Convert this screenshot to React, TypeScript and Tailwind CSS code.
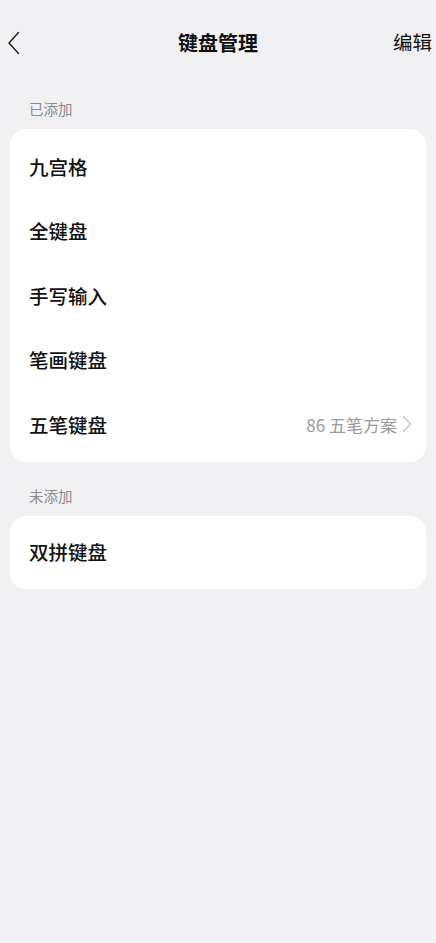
import React from 'react';

const added = ['九宫格', '全键盘', '手写输入', '笔画键盘'];

function Row({ title, extra }: { title: string; extra?: string }) {
  return (
    <div className="h-[64.5px] flex items-center justify-between pl-[19px] pr-[14px]">
      <span className="text-[19.5px] font-medium text-[#111] leading-none">{title}</span>
      {extra && (
        <div className="flex items-center gap-[5px]">
          <span className="text-[17px] text-[#9a9a9c] leading-none">{extra}</span>
          <svg width="10" height="18" viewBox="0 0 10 18" fill="none">
            <path d="M1.5 1.5 L8.5 9 L1.5 16.5" stroke="#c4c4c6" strokeWidth="1.4" strokeLinecap="round" strokeLinejoin="round" />
          </svg>
        </div>
      )}
    </div>
  );
}

export default function App() {
  return (
    <div
      className="min-h-[943px] w-[436px] bg-[#f1f0f3]"
      style={{ fontFamily: '"Noto Sans CJK SC", "Noto Sans", sans-serif' }}
    >
      {/* Header */}
      <div className="h-[86px] relative flex items-center justify-center">
        <button className="absolute left-[7px] top-[31px] p-0">
          <svg width="14" height="24" viewBox="0 0 14 24" fill="none">
            <path d="M11.5 1.5 L2 12 L11.5 22.5" stroke="#222" strokeWidth="1.5" strokeLinecap="round" strokeLinejoin="round" />
          </svg>
        </button>
        <h1 className="text-[20px] font-bold text-[#111] leading-none">键盘管理</h1>
        <span className="absolute right-[4px] top-[32px] text-[19.5px] text-[#111] leading-none">编辑</span>
      </div>

      {/* Added */}
      <div className="h-[43px] flex items-end pb-[10px] pl-[29px]">
        <span className="text-[14.5px] leading-[20px] text-[#8a8a8c]">已添加</span>
      </div>
      <div className="mx-[10px] bg-white rounded-[16px] py-[5px]">
        {added.map((t) => (
          <Row key={t} title={t} />
        ))}
        <Row title="五笔键盘" extra="86 五笔方案" />
      </div>

      {/* Not added */}
      <div className="h-[54px] flex items-end pb-[10px] pl-[29px]">
        <span className="text-[14.5px] leading-[20px] text-[#8a8a8c]">未添加</span>
      </div>
      <div className="mx-[10px] bg-white rounded-[16px] h-[73px] flex items-center pl-[19px]">
        <span className="text-[19.5px] font-medium text-[#111] leading-none">双拼键盘</span>
      </div>
    </div>
  );
}
